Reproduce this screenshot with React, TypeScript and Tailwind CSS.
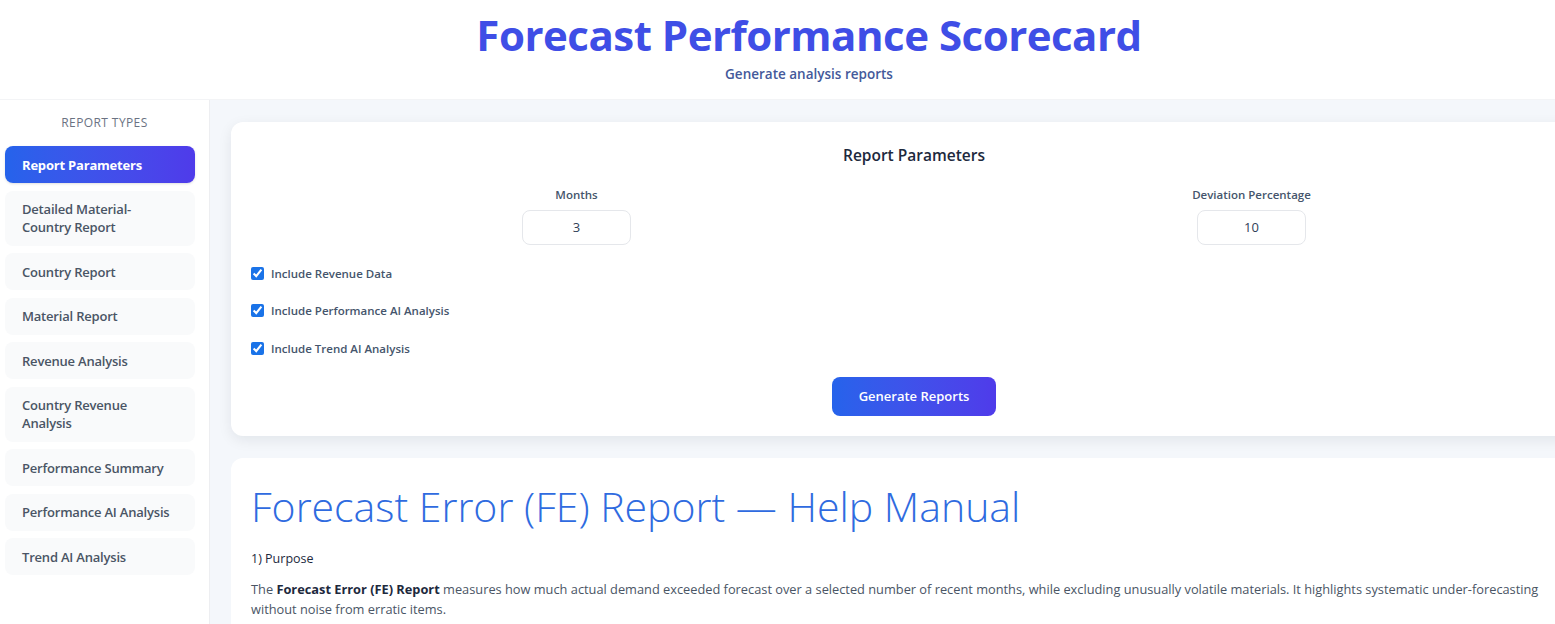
import { useState } from "react";

const reportTypes = [
  "Report Parameters",
  "Detailed Material-Country Report",
  "Country Report",
  "Material Report",
  "Revenue Analysis",
  "Country Revenue Analysis",
  "Performance Summary",
  "Performance AI Analysis",
  "Trend AI Analysis",
];

const options = [
  "Include Revenue Data",
  "Include Performance AI Analysis",
  "Include Trend AI Analysis",
];

export default function App() {
  const [active, setActive] = useState(0);
  const [months, setMonths] = useState("3");
  const [deviation, setDeviation] = useState("10");
  const [checked, setChecked] = useState([true, true, true]);

  const toggle = (i: number) =>
    setChecked((prev) => prev.map((v, idx) => (idx === i ? !v : v)));

  const inputClassName =
    "h-[35px] w-[109px] rounded-lg border border-gray-200 bg-white text-center text-[13px] text-slate-700 focus:outline-none";

  return (
    <div className="h-screen w-full overflow-hidden bg-white font-['Open_Sans','Noto_Sans',sans-serif]">
      <div className="flex w-[1618px] flex-col">
        {/* header */}
        <header className="flex h-[100px] flex-col items-center border-b border-gray-100 bg-white pt-[8px]">
          <h1 className="text-[42px] leading-[54px] font-bold tracking-[-0.5px] text-[#3f4ee6]">
            Forecast Performance Scorecard
          </h1>
          <p className="mt-[2px] text-[13.5px] font-semibold text-[#44599a]">
            Generate analysis reports
          </p>
        </header>

        <div className="flex min-h-[600px]">
          {/* sidebar */}
          <aside className="flex w-[210px] shrink-0 flex-col border-r border-gray-200/70 bg-white px-[5px] pt-[14px]">
            <div className="mb-[14px] text-center text-[12px] font-medium tracking-[0.4px] text-gray-500">
              REPORT TYPES
            </div>
            <nav className="flex w-[190px] flex-col gap-[7.5px]">
              {reportTypes.map((r, i) => (
                <button
                  key={r}
                  onClick={() => setActive(i)}
                  className={
                    i === active
                      ? "rounded-lg bg-gradient-to-r from-[#2563eb] to-[#4f3bea] px-[17px] py-[9.5px] text-left text-[13px] leading-[18px] font-bold tracking-[-0.2px] text-white shadow-sm"
                      : "rounded-lg bg-gray-50 px-[17px] py-[9.5px] text-left text-[13px] leading-[18px] font-semibold tracking-[-0.2px] text-gray-600"
                  }
                >
                  {r === "Detailed Material-Country Report" ? (
                    <>
                      Detailed Material-
                      <br />
                      Country Report
                    </>
                  ) : r === "Country Revenue Analysis" ? (
                    <>
                      Country Revenue
                      <br />
                      Analysis
                    </>
                  ) : (
                    r
                  )}
                </button>
              ))}
            </nav>
          </aside>

          {/* main */}
          <main className="flex flex-1 flex-col gap-[22px] bg-[#f4f7fb] px-[21px] pt-[22px]">
            <section className="rounded-xl bg-white px-5 pt-[22px] pb-5 shadow-[0_4px_14px_rgba(15,23,42,0.08)]">
              <h2 className="text-center text-[15.5px] font-semibold text-slate-800">
                Report Parameters
              </h2>

              <div className="mt-[19px] grid grid-cols-2 gap-6">
                <label className="flex flex-col items-center gap-[6px]">
                  <span className="text-[11.5px] font-semibold text-slate-600">
                    Months
                  </span>
                  <input
                    value={months}
                    onChange={(e) => setMonths(e.target.value)}
                    className={inputClassName}
                  />
                </label>
                <label className="flex flex-col items-center gap-[6px]">
                  <span className="text-[11.5px] font-semibold text-slate-600">
                    Deviation Percentage
                  </span>
                  <input
                    value={deviation}
                    onChange={(e) => setDeviation(e.target.value)}
                    className={inputClassName}
                  />
                </label>
              </div>

              <div className="mt-[20px] flex flex-col gap-[20.5px]">
                {options.map((o, i) => (
                  <label key={o} className="flex items-center gap-[7px]">
                    <input
                      type="checkbox"
                      checked={checked[i]}
                      onChange={() => toggle(i)}
                      className="h-[13px] w-[13px] accent-[#1a73e8]"
                    />
                    <span className="text-[11.5px] font-semibold text-slate-600">
                      {o}
                    </span>
                  </label>
                ))}
              </div>

              <div className="mt-[20px] flex justify-center">
                <button className="h-[39px] w-[164px] rounded-lg bg-gradient-to-r from-[#2563eb] to-[#4f3bea] text-[13px] font-semibold text-white">
                  Generate Reports
                </button>
              </div>
            </section>

            <section className="rounded-t-xl bg-white px-5 pt-[20px] pb-10">
              <h2 className="text-[41px] leading-[56px] font-light text-[#2f6be0]">
                Forecast Error (FE) Report — Help Manual
              </h2>
              <h3 className="mt-[16px] text-[12.5px] font-medium text-slate-800">
                1) Purpose
              </h3>
              <p className="mt-[10px] text-[12.8px] leading-[20px] text-gray-600">
                The{" "}
                <strong className="font-bold text-slate-800">
                  Forecast Error (FE) Report
                </strong>{" "}
                measures how much actual demand exceeded forecast over a
                selected number of recent months, while excluding unusually
                volatile materials. It highlights systematic under&#8209;forecasting
                without noise from erratic items.
              </p>
            </section>
          </main>
        </div>
      </div>
    </div>
  );
}
